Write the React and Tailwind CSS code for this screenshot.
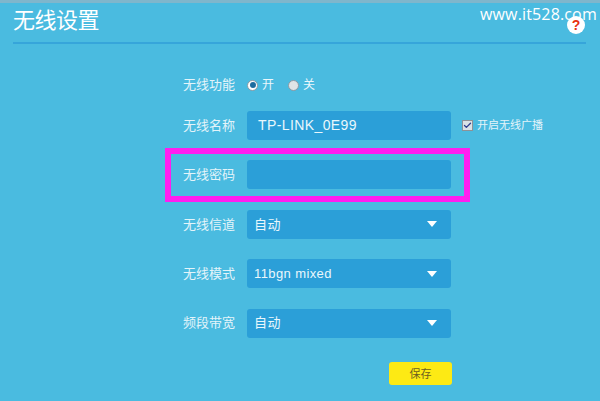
import { Check } from "lucide-react";

const cjk = "font-['Liberation_Sans','Noto_Sans_CJK_SC',sans-serif]";

function Row({ label, children }) {
    return (
        <div className="flex items-center h-[30px] mb-[19.4px]">
            <div className="w-[52px] mr-[12px] text-[13px] text-[#e3f4fa]">{label}</div>
            {children}
        </div>
    );
}

function Field({ value, select, big }) {
    return (
        <div className="w-[204px] h-[29px] rounded-[3px] bg-[#2b9fd8] flex items-center justify-between text-[#eaf7fc]">
            <span className={big ? "pl-[11px] text-[14px] tracking-[0.4px]" : "pl-[7px] text-[13px] tracking-[0.4px]"}>{value}</span>
            {select && <span className="mr-[14px] w-0 h-0 border-x-[5px] border-x-transparent border-t-[6px] border-t-white" />}
        </div>
    );
}

function Radio({ on, label }) {
    return (
        <div className="flex items-center gap-[4px] text-[12px] text-[#eaf7fc]">
            <span className={`w-[11px] h-[11px] rounded-full border border-[#8a9aa5] flex items-center justify-center ${on ? "bg-white" : "bg-[#dfe4e6]"}`}>
                {on && <span className="w-[6px] h-[6px] rounded-full bg-[#1c6c9f]" />}
            </span>
            {label}
        </div>
    );
}

export default function App() {
    return (
        <div className={`relative w-[600px] h-[401px] overflow-hidden bg-[#4abbe0] ${cjk}`}>
            <div className="h-[3px] bg-[#7fb6cc]" />

            {/* Header */}
            <div className="mx-[13px] mr-[14px] h-[41px] border-b-2 border-[#36a5da] pt-[4px]">
                <h1 className="text-[22px] leading-[28px] tracking-[-0.5px] text-white">无线设置</h1>
            </div>

            {/* Form */}
            <div className="pt-[31px] pl-[183px]">
                <div className="flex items-center h-[20px] mb-[15.5px]">
                    <div className="w-[52px] mr-[12px] text-[13px] text-[#e3f4fa]">无线功能</div>
                    <div className="flex items-center gap-[14px]">
                        <Radio on label="开" />
                        <Radio label="关" />
                    </div>
                </div>
                <Row label="无线名称">
                    <Field value="TP-LINK_0E99" big />
                    <div className="ml-[11px] flex items-center gap-[4px] text-[11px] text-[#e3f4fa]">
                        <span className="w-[11px] h-[11px] border border-[#8d9297] bg-[#d9e2e6] flex items-center justify-center">
                            <Check className="w-[9px] h-[9px] text-[#2f3f8f]" strokeWidth={3.5} />
                        </span>
                        开启无线广播
                    </div>
                </Row>
                <Row label="无线密码"><Field value="" /></Row>
                <Row label="无线信道"><Field value="自动" select /></Row>
                <Row label="无线模式"><Field value="11bgn mixed" select /></Row>
                <Row label="频段带宽"><Field value="自动" select /></Row>
                <div className="ml-[206px] mt-[24.4px] w-[63px] h-[23px] rounded-[3px] bg-[#fdea14] flex items-center justify-center text-[11px] text-[#6b5f20]">
                    保存
                </div>
            </div>

            {/* Watermark, help badge and highlight sit on top of the page */}
            <div className="absolute left-[480px] top-[3px] text-[16px] leading-[22px] tracking-[0.15px] text-white font-['Open_Sans',sans-serif]">www.it528.com</div>
            <div className="absolute left-[567px] top-[16px] w-[18px] h-[18px] rounded-full bg-white flex items-center justify-center text-[14px] font-bold text-[#e8320f]">?</div>
            <div className="absolute left-[165px] top-[148px] w-[305px] h-[54px] border-[6px] border-[#ff1ef0]" />
        </div>
    );
}
